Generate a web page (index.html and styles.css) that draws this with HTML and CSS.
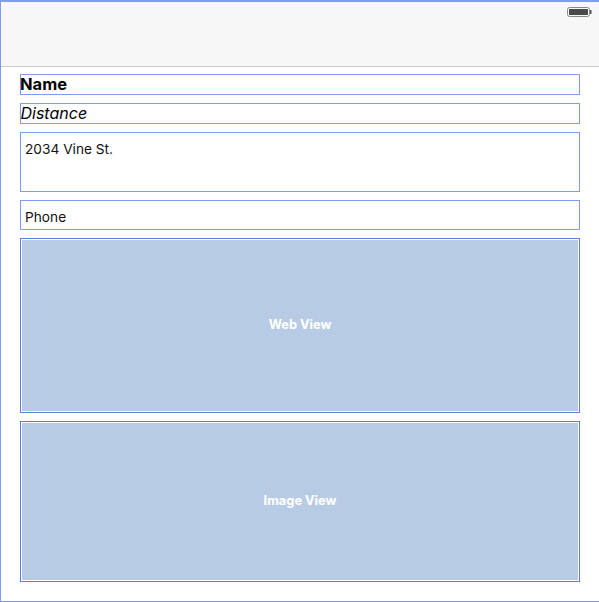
FILE: index.html
```html
<!DOCTYPE html>
<html lang="en">
<head>
<meta charset="utf-8">
<title>Storyboard</title>
<link rel="stylesheet" href="styles.css">
</head>
<body>
<div class="screen">
  <header class="status">
    <svg class="battery" width="25" height="11" viewBox="0 0 25 11" aria-hidden="true">
      <rect x="0.5" y="0.5" width="22" height="9" rx="2" fill="none" stroke="#8a8a8a"/>
      <rect x="2" y="2" width="19" height="6" rx="0.5" fill="#4a4a4a"/>
      <rect x="23" y="3" width="1.5" height="4" fill="#555"/>
    </svg>
  </header>
  <main class="content">
    <div class="field field-name">Name</div>
    <div class="field field-distance">Distance</div>
    <div class="field field-address">2034 Vine St.</div>
    <div class="field field-phone">Phone</div>
    <div class="placeholder placeholder-web">Web View</div>
    <div class="placeholder placeholder-image">Image View</div>
  </main>
</div>
</body>
</html>
```
FILE: styles.css
```css
html, body {
  margin: 0;
  padding: 0;
  background: #fff;
}

.screen {
  box-sizing: border-box;
  width: 599px;
  height: 602px;
  border-top: 2px solid #7f9cf5;
  border-left: 1px solid #7f9cf5;
  border-bottom: 1px solid #7f9cf5;
  font-family: Inter, "Liberation Sans", sans-serif;
  color: #000;
}

.status {
  box-sizing: border-box;
  height: 65px;
  background: #f7f7f7;
  border-bottom: 1px solid #cccccc;
  display: flex;
  justify-content: flex-end;
  align-items: flex-start;
  padding: 5px 7px 0 0;
}

.content {
  display: flex;
  flex-direction: column;
  gap: 8px;
  padding: 7px 19px 0 19px;
}

.field {
  box-sizing: border-box;
  border: 1px solid #7f9cf5;
  display: flex;
}

.field-name {
  height: 21px;
  font-size: 16.5px;
  font-weight: 700;
  line-height: 19px;
  text-indent: -1px;
}

.field-distance {
  height: 21px;
  font-size: 16px;
  font-style: italic;
  line-height: 19px;
  text-indent: -0.5px;
}

.field-address {
  height: 60px;
  font-size: 13.7px;
  line-height: 17px;
  padding: 8px 4px 0;
  color: #111;
}

.field-phone {
  height: 30px;
  font-size: 13.7px;
  line-height: 17px;
  padding: 8px 4px 0;
  color: #111;
}

.placeholder {
  box-sizing: border-box;
  border: 1px solid #5f7fd8;
  background: #b7cce4;
  box-shadow: inset 0 0 0 1px #fff;
  color: #fff;
  font-size: 12.8px;
  font-weight: 700;
  display: flex;
  align-items: center;
  justify-content: center;
  padding-bottom: 2px;
}

.placeholder-web {
  height: 175px;
}

.placeholder-image {
  height: 161px;
}
```
